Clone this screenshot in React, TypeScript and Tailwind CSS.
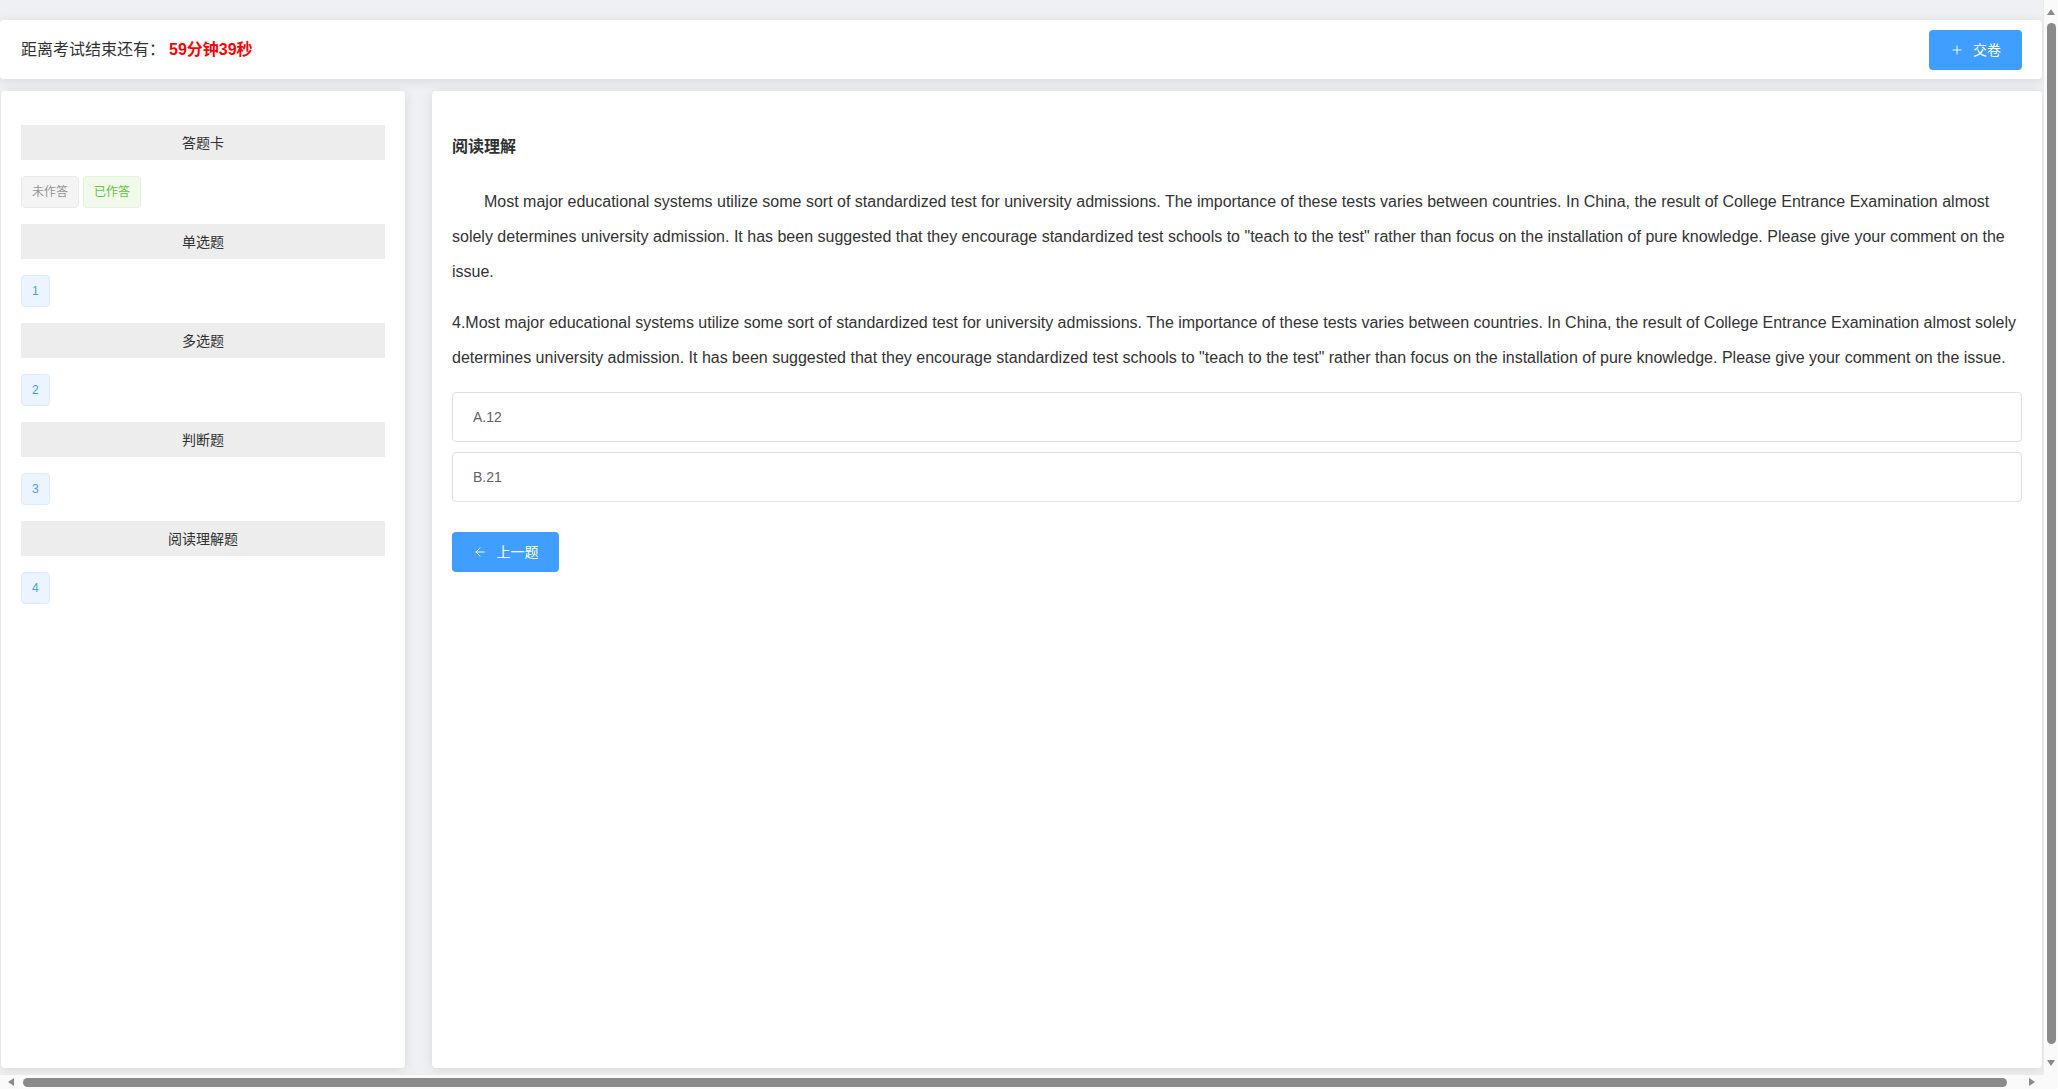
import React from "react";
import { ArrowLeft, Plus } from "lucide-react";

const sections = [
  { title: "单选题", nums: [1] },
  { title: "多选题", nums: [2] },
  { title: "判断题", nums: [3] },
  { title: "阅读理解题", nums: [4] },
];

const passage =
  'Most major educational systems utilize some sort of standardized test for university admissions. The importance of these tests varies between countries. In China, the result of College Entrance Examination almost solely determines university admission. It has been suggested that they encourage standardized test schools to "teach to the test" rather than focus on the installation of pure knowledge. Please give your comment on the issue.';

function SectionBar({ children }: { children: React.ReactNode }) {
  return (
    <div className="flex h-[35px] items-center justify-center bg-[#ededed] text-sm text-[#303133]">
      {children}
    </div>
  );
}

function Tag({ label, tone }: { label: string | number; tone: "info" | "success" | "primary" }) {
  const tones = {
    info: "bg-[#f4f4f5] border-[#e9e9eb] text-[#909399]",
    success: "bg-[#f0f9eb] border-[#e1f3d8] text-[#67c23a]",
    primary: "bg-[#ecf5ff] border-[#d9ecff] text-[#409eff]",
  };
  return (
    <span className={`inline-flex h-8 items-center rounded border px-[10px] text-xs ${tones[tone]}`}>
      {label}
    </span>
  );
}

// browser scrollbar look, drawn over the page
function Arrow({ dir }: { dir: "up" | "down" | "left" | "right" }) {
  const pts = {
    up: "0,7 4,1 8,7",
    down: "0,1 4,7 8,1",
    left: "7,0 1,4 7,8",
    right: "1,0 7,4 1,8",
  };
  return (
    <svg width="8" height="8" viewBox="0 0 8 8" className="shrink-0">
      <polygon points={pts[dir]} fill="#8a8a8a" />
    </svg>
  );
}

function Scrollbars() {
  return (
    <>
      <div className="fixed right-0 top-0 flex h-[1074px] w-[15px] flex-col items-center border-l border-[#ebebeb] bg-[#fafafa] pt-[8px]">
        <Arrow dir="up" />
        <div className="mt-[7px] h-[1021px] w-[9px] rounded-full bg-[#8a8a8a]" />
        <div className="mt-[15px]">
          <Arrow dir="down" />
        </div>
      </div>
      <div className="fixed bottom-0 left-0 flex h-[15px] w-[2043px] items-center border-t border-[#ebebeb] bg-[#fafafa] pl-[7px]">
        <Arrow dir="left" />
        <div className="ml-[8px] h-[9px] w-[1984px] rounded-full bg-[#8a8a8a]" />
        <div className="ml-[21px]">
          <Arrow dir="right" />
        </div>
      </div>
      <div className="fixed bottom-0 right-0 h-[15px] w-[15px] bg-[#fafafa]" />
    </>
  );
}

export default function App() {
  return (
    <div className="min-h-[1089px] bg-[#eef0f4] pt-5 pb-[18px] font-['Liberation_Sans','Noto_Sans_CJK_SC',sans-serif] text-[#303133]">
      <div className="w-[2042px]">
        <header className="flex h-[59px] items-center justify-between rounded bg-white px-5 shadow-[0_2px_12px_0_rgba(0,0,0,0.1)]">
          <div className="flex items-center text-base">
            <span className="pl-px">距离考试结束还有：</span>
            <span className="ml-[4px] font-bold text-[#ff0000]">59分钟39秒</span>
          </div>
          <button className="flex h-10 w-[93px] items-center justify-center gap-[9px] rounded bg-[#409eff] text-sm text-white">
            <Plus size={14} strokeWidth={1.6} />
            <span>交卷</span>
          </button>
        </header>

        <div className="mt-3 flex gap-[27px]">
          <aside className="ml-px h-[977px] w-[404px] rounded bg-white px-5 pt-[34px] shadow-[0_2px_12px_0_rgba(0,0,0,0.1)]">
            <div className="flex flex-col gap-4">
              <SectionBar>答题卡</SectionBar>
              <div className="flex gap-1">
                <Tag label="未作答" tone="info" />
                <Tag label="已作答" tone="success" />
              </div>
              {sections.map((s) => (
                <React.Fragment key={s.title}>
                  <SectionBar>{s.title}</SectionBar>
                  <div className="flex gap-1">
                    {s.nums.map((n) => (
                      <Tag key={n} label={n} tone="primary" />
                    ))}
                  </div>
                </React.Fragment>
              ))}
            </div>
          </aside>

          <main className="h-[977px] flex-1 rounded bg-white px-5 pt-[44px] shadow-[0_2px_12px_0_rgba(0,0,0,0.1)]">
            <h3 className="text-base font-bold leading-6 text-[#303133]">阅读理解</h3>
            <p className="mt-[25px] indent-8 text-base leading-[35px] text-[#333]">{passage}</p>
            <p className="mt-[16px] text-base leading-[35px] text-[#333]">4.{passage}</p>

            <div className="mt-[17px] flex flex-col gap-[10px]">
              {["A.12", "B.21"].map((o) => (
                <div
                  key={o}
                  className="flex h-[50px] items-center rounded border border-[#dcdfe6] px-5 text-sm text-[#606266]"
                >
                  {o}
                </div>
              ))}
            </div>

            <button className="mt-[30px] flex h-10 w-[107px] items-center justify-center gap-[10px] rounded bg-[#409eff] text-sm text-white">
              <ArrowLeft size={14} strokeWidth={1.6} />
              <span>上一题</span>
            </button>
          </main>
        </div>
      </div>
      <Scrollbars />
    </div>
  );
}
